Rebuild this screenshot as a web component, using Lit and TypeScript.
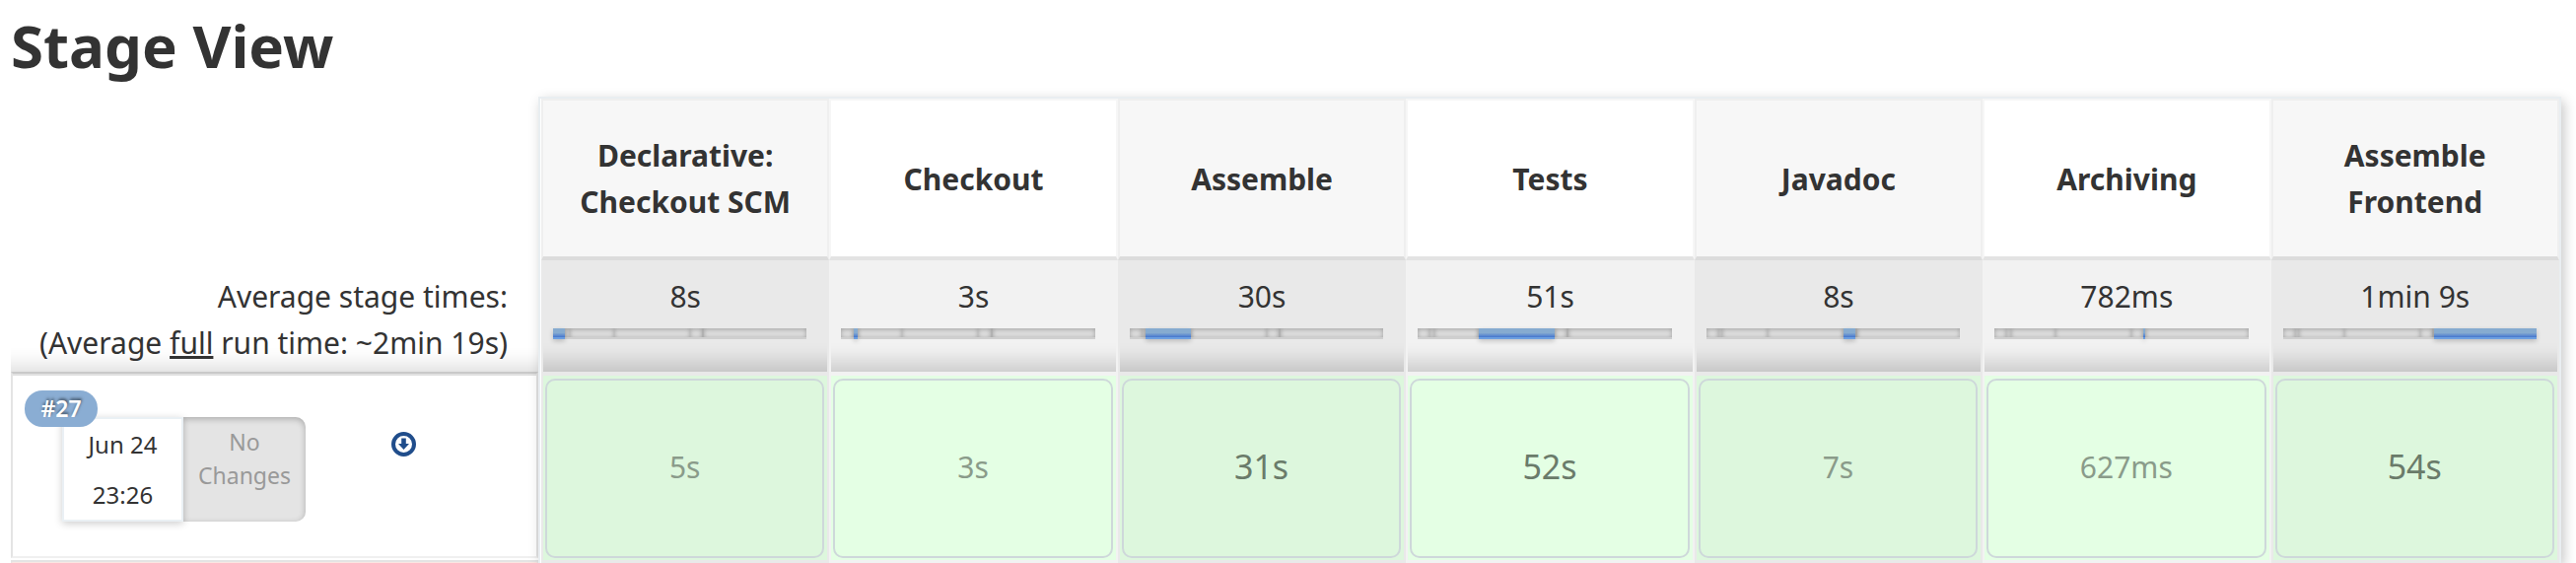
import { LitElement, html, css } from "lit";
import { customElement } from "lit/decorators.js";

interface Stage {
  name: string;
  average: string;
  seconds: number;
  run: string;
  weight: "short" | "long";
}

const STAGES: Stage[] = [
  { name: "Declarative: Checkout SCM", average: "8s", seconds: 8, run: "5s", weight: "short" },
  { name: "Checkout", average: "3s", seconds: 3, run: "3s", weight: "short" },
  { name: "Assemble", average: "30s", seconds: 30, run: "31s", weight: "long" },
  { name: "Tests", average: "51s", seconds: 51, run: "52s", weight: "long" },
  { name: "Javadoc", average: "8s", seconds: 8, run: "7s", weight: "short" },
  { name: "Archiving", average: "782ms", seconds: 1, run: "627ms", weight: "short" },
  { name: "Assemble Frontend", average: "1min 9s", seconds: 69, run: "54s", weight: "long" },
];

/** Shows where one stage falls within the whole run. */
@customElement("stage-bar")
class StageBar extends LitElement {
  static properties = { active: { type: Number } };
  declare active: number;

  static styles = css`
    :host {
      display: flex;
      height: 11px;
    }
    .part {
      box-sizing: border-box;
      flex-basis: 0;
      min-width: 2px;
      background: #dedede;
      border-bottom: 2px solid #cfcfcf;
      box-shadow: inset 0 1px 5px rgba(0, 0, 0, 0.28);
    }
    .active {
      z-index: 1;
      background: linear-gradient(#86abd0 50%, #4476cf);
      border-bottom-color: #6d9fe0;
      box-shadow: 0 2px 5px rgba(0, 0, 0, 0.2);
    }
  `;

  render() {
    return STAGES.map(
      (s, i) =>
        html`<span class="part ${i === this.active ? "active" : ""}" style="flex-grow:${s.seconds}"></span>`,
    );
  }
}

@customElement("app-root")
class AppRoot extends LitElement {
  static styles = css`
    :host {
      display: block;
      color: #333;
      background: #fff;
      font: 30px/47px "Noto Sans", "Open Sans", sans-serif;
      overflow: hidden;
    }
    * {
      box-sizing: border-box;
    }
    h1 {
      margin: 0;
      padding: 0 11px;
      height: 98px;
      font-size: 60px;
      line-height: 92px;
      font-weight: 700;
    }
    .view {
      display: flex;
      padding: 0 15px 0 11px;
    }
    .side {
      flex: 0 0 535px;
      display: flex;
      flex-direction: column;
      padding-top: 166px;
    }
    .summary {
      height: 113px;
      padding: 13px 31px 0 0;
      text-align: right;
      box-shadow: inset 0 -30px 20px -24px rgba(0, 0, 0, 0.14);
    }
    .summary p {
      margin: 0;
    }
    .run {
      height: 189px;
      border: 2px solid #e4e4e4;
      border-top: 2px solid #c9c9c9;
      border-bottom-color: #f0f0f0;
      box-shadow: inset 0 2px #e0e0e0;
      padding: 17px 12px;
      font-size: 24px;
    }
    .next {
      margin-top: 2px;
      height: 3px;
      border: 2px solid #e4e4e4;
      border-bottom: 1px solid #fbe6e2;
    }
    .badge {
      display: block;
      width: 74px;
      position: relative;
      border-radius: 18px;
      background: #8aadd3;
      color: #fff;
      font-size: 23px;
      font-weight: 600;
      line-height: 37px;
      text-align: center;
      text-decoration: none;
      text-shadow: 1px -2px 3px rgba(0, 0, 0, 0.5);
    }
    .detail {
      display: flex;
      margin: -10px 0 0 38px;
      height: 106px;
      text-align: center;
    }
    .date {
      width: 123px;
      border: 2px solid #eaf0f4;
      box-shadow: 0 2px 8px rgba(0, 0, 0, 0.2);
      line-height: 51px;
    }
    .date time {
      display: block;
    }
    .changes {
      width: 124px;
      padding-top: 8px;
      border-radius: 0 10px 10px 0;
      background: #e4e4e4;
      color: #999;
      font-size: 23px;
      line-height: 34px;
      box-shadow: inset 0 2px 6px rgba(0, 0, 0, 0.25);
    }
    .download {
      margin: 15px 0 0 87px;
      padding: 0;
      width: 25px;
      height: 25px;
      border: 0;
      background: none;
    }
    .download svg {
      display: block;
      width: 100%;
      height: 100%;
    }
    .panel {
      flex: 1;
      min-width: 0;
      padding: 0 0 0 1px;
      border: 2px solid #e9eef1;
      border-bottom: 0;
      box-shadow: 3px 4px 12px rgba(0, 0, 0, 0.22);
    }
    table {
      width: 100%;
      table-layout: fixed;
      border-collapse: separate;
      border-spacing: 0;
    }
    th,
    td {
      padding: 0;
      border: 2px solid #f6f6f6;
      text-align: center;
    }
    th {
      height: 164px;
      padding: 0 20px;
      border-bottom: 4px solid #e3e3e3;
      font-weight: 700;
      background: #fff;
    }
    th:nth-child(odd) {
      border-color: #efefef;
      border-bottom-color: #dcdcdc;
      background: #f7f7f7;
    }
    .average td {
      height: 117px;
      padding: 13px 21px 0 10px;
      vertical-align: top;
      border-width: 0 2px 4px;
      border-color: #f2f2f2;
      background: #f2f2f2;
      background-clip: padding-box;
      box-shadow: inset 0 -34px 20px -24px rgba(0, 0, 0, 0.16);
    }
    .average td:nth-child(odd) {
      border-color: #e9e9e9;
      background-color: #e9e9e9;
    }
    .average span {
      display: block;
      padding-left: 11px;
      margin-bottom: 9px;
    }
    .result td {
      height: 190px;
      padding: 3px 3px 2px 2px;
      border-width: 0 2px 3px;
      border-color: #f2f2f2;
      background: #e4ffe4;
      background-clip: padding-box;
    }
    .result td:nth-child(odd) {
      border-color: #e9e9e9;
      background-color: #ddf7dd;
    }
    .cell {
      display: flex;
      height: 182px;
      padding-bottom: 4px;
      align-items: center;
      justify-content: center;
      border: 2px solid #ced8da;
      border-radius: 10px;
      color: #8a9b8a;
    }
    .long {
      color: #6a7b6a;
      font-size: 34px;
    }
  `;

  render() {
    return html`
      <h1>Stage View</h1>
      <div class="view">
        <section class="side">
          <div class="summary">
            <p>Average stage times:</p>
            <p>(Average <u>full</u> run time: ~2min 19s)</p>
          </div>
          <div class="run">
            <a class="badge" href="#27">#27</a>
            <div class="detail">
              <div class="date"><time>Jun 24</time><time>23:26</time></div>
              <div class="changes">No<br />Changes</div>
              <button class="download" aria-label="Download artifacts">
                <svg viewBox="0 0 25 25">
                  <circle cx="12.5" cy="12.5" r="10.5" fill="#fff" stroke="#204d8b" stroke-width="4" />
                  <path d="M10.2 6.5h4.6v5.6h3.2L12.5 18 7 12.1h3.2z" fill="#204d8b" />
                </svg>
              </button>
            </div>
          </div>
          <div class="next"></div>
        </section>
        <div class="panel">
          <table>
            <thead>
              <tr>
                ${STAGES.map((s) => html`<th scope="col">${s.name}</th>`)}
              </tr>
            </thead>
            <tbody>
              <tr class="average">
                ${STAGES.map(
                  (s, i) => html`<td><span>${s.average}</span><stage-bar .active=${i}></stage-bar></td>`,
                )}
              </tr>
              <tr class="result">
                ${STAGES.map((s) => html`<td><div class="cell ${s.weight}">${s.run}</div></td>`)}
              </tr>
            </tbody>
          </table>
        </div>
      </div>
    `;
  }
}
